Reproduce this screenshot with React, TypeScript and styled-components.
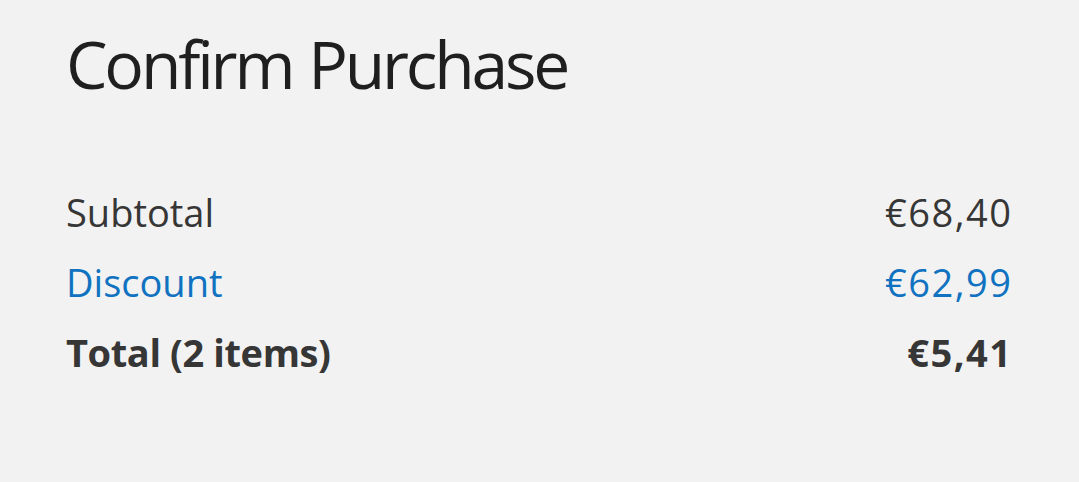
import React from "react";
import styled, { createGlobalStyle } from "styled-components";

const GlobalStyle = createGlobalStyle`
  html, body {
    margin: 0;
    padding: 0;
    background: #f2f2f2;
  }
  body {
    font-family: "Open Sans", "Noto Sans", sans-serif;
  }
`;

const Page = styled.div`
  width: 1079px;
  height: 482px;
  box-sizing: border-box;
  padding: 17px 68px 0 66px;
  background: #f2f2f2;
`;

const Title = styled.h1`
  margin: 0;
  font-size: 66px;
  font-weight: 400;
  color: #1f1f1f;
  line-height: 92px;
  letter-spacing: -3.2px;
  word-spacing: 2px;
`;

const Summary = styled.div`
  margin-top: 68px;
  display: flex;
  flex-direction: column;
`;

const Row = styled.div<{ $tone?: "blue"; $bold?: boolean }>`
  display: flex;
  justify-content: space-between;
  height: 70px;
  line-height: 70px;
  font-size: 38px;
  font-weight: ${(p) => (p.$bold ? 700 : 400)};
  color: ${(p) => (p.$tone === "blue" ? "#1072c0" : "#363636")};
`;

const Label = styled.span<{ $bold?: boolean }>`
  letter-spacing: ${(p) => (p.$bold ? "-0.4px" : "0")};
`;

const Value = styled.span`
  letter-spacing: 1.5px;
  margin-right: -1.5px;
`;

const rows = [
  { label: "Subtotal", value: "€68,40" },
  { label: "Discount", value: "€62,99", tone: "blue" as const },
  { label: "Total (2 items)", value: "€5,41", bold: true },
];

export default function App() {
  return (
    <>
      <GlobalStyle />
      <Page>
        <Title>Confirm Purchase</Title>
        <Summary>
          {rows.map((r) => (
            <Row key={r.label} $tone={r.tone} $bold={r.bold}>
              <Label $bold={r.bold}>{r.label}</Label>
              <Value>{r.value}</Value>
            </Row>
          ))}
        </Summary>
      </Page>
    </>
  );
}
